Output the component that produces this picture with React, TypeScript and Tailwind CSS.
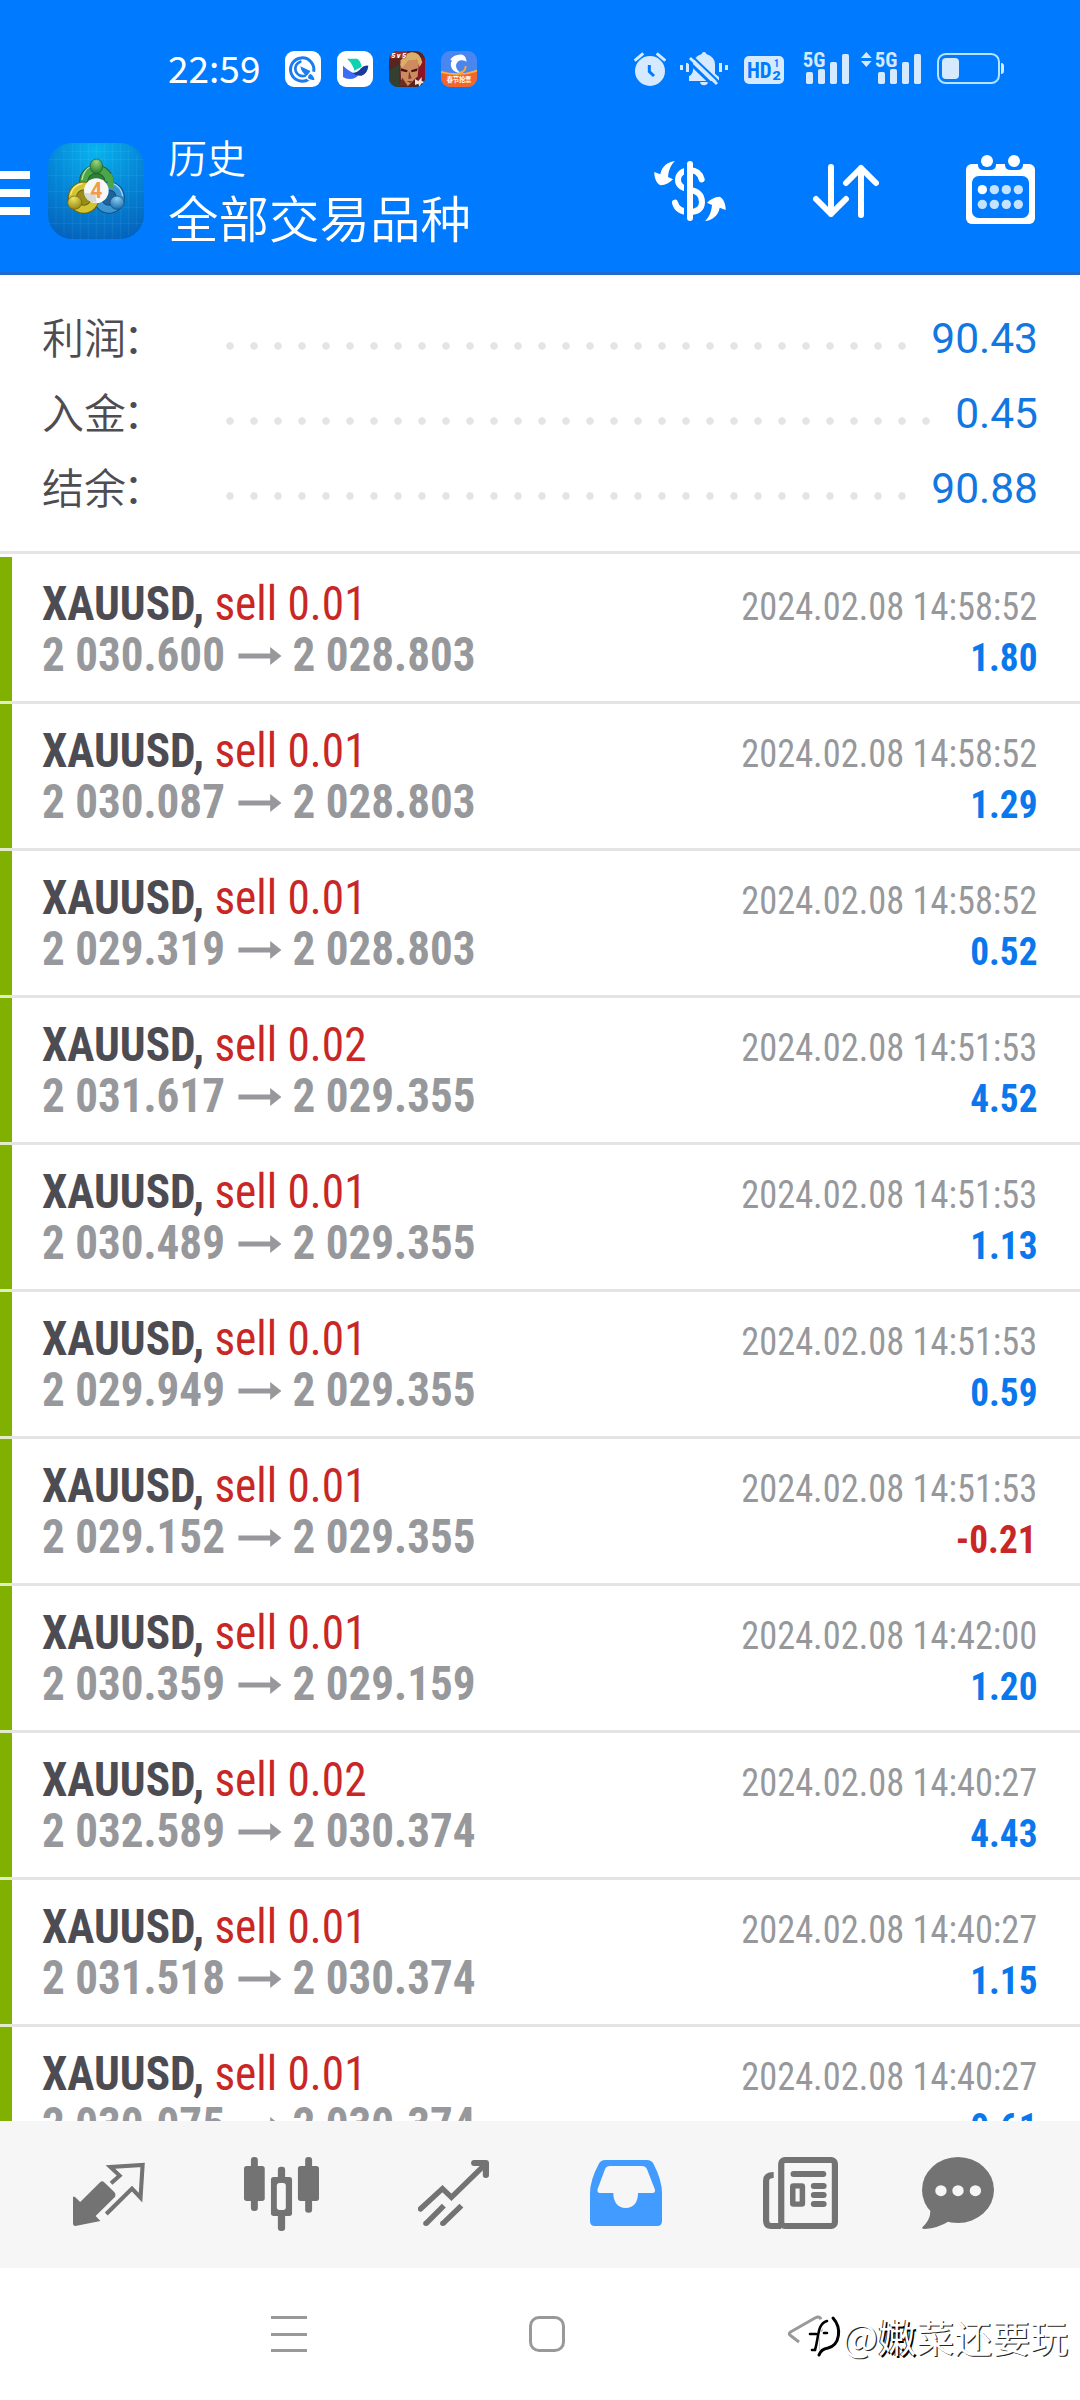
interface Deal {
  volume: string
  open: string
  close: string
  time: string
  profit: string
}

const SUMMARY = [
  { label: '利润', value: '90.43', dots: 'w-[696px]' },
  { label: '入金', value: '0.45', dots: 'w-[720px]' },
  { label: '结余', value: '90.88', dots: 'w-[696px]' },
]

const DEALS: Deal[] = [
  { volume: '0.01', open: '2 030.600', close: '2 028.803', time: '2024.02.08 14:58:52', profit: '1.80' },
  { volume: '0.01', open: '2 030.087', close: '2 028.803', time: '2024.02.08 14:58:52', profit: '1.29' },
  { volume: '0.01', open: '2 029.319', close: '2 028.803', time: '2024.02.08 14:58:52', profit: '0.52' },
  { volume: '0.02', open: '2 031.617', close: '2 029.355', time: '2024.02.08 14:51:53', profit: '4.52' },
  { volume: '0.01', open: '2 030.489', close: '2 029.355', time: '2024.02.08 14:51:53', profit: '1.13' },
  { volume: '0.01', open: '2 029.949', close: '2 029.355', time: '2024.02.08 14:51:53', profit: '0.59' },
  { volume: '0.01', open: '2 029.152', close: '2 029.355', time: '2024.02.08 14:51:53', profit: '-0.21' },
  { volume: '0.01', open: '2 030.359', close: '2 029.159', time: '2024.02.08 14:42:00', profit: '1.20' },
  { volume: '0.02', open: '2 032.589', close: '2 030.374', time: '2024.02.08 14:40:27', profit: '4.43' },
  { volume: '0.01', open: '2 031.518', close: '2 030.374', time: '2024.02.08 14:40:27', profit: '1.15' },
  { volume: '0.01', open: '2 030.075', close: '2 030.374', time: '2024.02.08 14:40:27', profit: '0.61' },
]

const BLUE = '#007aff'
const GREY = '#737373'

/* Status bar */

function AppBadges() {
  return (
    <div className="flex gap-4">
      <svg className="h-9 w-9" viewBox="0 0 108 108">
        <rect width="108" height="108" rx="27" fill="#fff" />
        <path d="M72 84a35 35 0 1 1 14-22" fill="none" stroke="#1a7cf0" strokeWidth="9" />
        <path d="M46 32A22 22 0 1 0 60 74" fill="none" stroke="#1a7cf0" strokeWidth="8" strokeLinecap="round" />
        <path d="M46 46l30 14-8 16q-18-8-22-30z" fill="#1a7cf0" />
        <path d="M76 66q16 10 14 24-16 0-24-8 2-12 10-16z" fill="#1a7cf0" stroke="#fff" strokeWidth="4" />
      </svg>
      <svg className="h-9 w-9" viewBox="0 0 108 108">
        <rect width="108" height="108" rx="27" fill="#fff" />
        <path d="M30 23h30q10 4 14 24l-22 12q-4-20-22-36z" fill="#0fd3b0" />
        <path d="M18 44q22 22 48 26-8 14-28 14-12 0-20-6z" fill="#3f6cf5" />
        <path d="M46 66q18-2 26-14 8-10 22-8-2 24-20 30-16 2-28-8z" fill="#173a9c" />
      </svg>
      <svg className="h-9 w-9" viewBox="0 0 108 108">
        <clipPath id="hero"><rect width="108" height="108" rx="27" /></clipPath>
        <g clipPath="url(#hero)">
          <rect width="108" height="108" fill="#5a2420" />
          <path d="M0 60l30-20v68H0z" fill="#33402f" />
          <path d="M80 20h28v60l-20 10z" fill="#8c1424" />
          <path d="M34 28q24-24 56 4l-4 44-30 30-20-20z" fill="#cf8a60" />
          <path d="M34 42q4-32 32-38 26-4 34 30l-8 14-8-22-26 2-18 22z" fill="#d9b068" />
          <path d="M36 52l20 6-2 6-18-4zM66 58l20-6-2 8-16 4z" fill="#3a1812" />
          <path d="M60 60l8 22-10 2zM52 90h18l-6 6z" fill="#7c3e2a" />
          <path d="M40 80l16 24H30z" fill="#6a2f24" />
          <path d="M78 84l10 6 10-12v12l10 4-12 4-4 10-4-10-10 4z" fill="#f6e3d4" />
          <path d="M0 0h56l-6 22H0z" fill="#96302a" />
        </g>
        <text x="7" y="21" fill="#fff" fontSize="22" fontWeight="900" fontStyle="italic" fontFamily="Roboto" textLength="44">5v5</text>
      </svg>
      <svg className="h-9 w-9" viewBox="0 0 108 108">
        <clipPath id="train"><rect width="108" height="108" rx="27" /></clipPath>
        <g clipPath="url(#train)">
          <rect width="108" height="108" fill="#4a86f0" />
          <path d="M0 62q54 16 108-4v50H0z" fill="#f2662e" />
          <path d="M0 60q54 16 108-4v6q-54 18-108 4z" fill="#fbb03c" />
        </g>
        <path d="M28 26q8-12 22-14 16-6 24 8l3 12q-8-6-18-4-14 4-14 18 2 12 14 20-24 0-29-20-2-14 4-16z" fill="#fff" />
        <path d="M56 65q18-2 18-20" fill="none" stroke="#f9a53a" strokeWidth="6" />
        <text x="17" y="92" fill="#fff" fontSize="19" fontWeight="700" fontFamily="'Noto Sans CJK SC'" textLength="74">春节抢票</text>
      </svg>
    </div>
  )
}

function Signal({ x }: { x: number }) {
  return (
    <g transform={`translate(${x} 0)`}>
      <text x="-1" y="110" fontSize="59" fontWeight="700" fontFamily="'Roboto Condensed'" textLength="68" lengthAdjust="spacingAndGlyphs">5G</text>
      <rect x="9" y="126" width="21" height="36" rx="5" />
      <rect x="45" y="117" width="21" height="45" rx="5" />
      <rect x="81" y="96" width="21" height="66" rx="5" />
      <rect x="117" y="72" width="21" height="90" rx="5" />
    </g>
  )
}

function StatusIcons() {
  return (
    <div className="flex">
      <svg className="h-[35px] w-8" viewBox="102 63 96 105" fill="#d6eaff">
        <circle cx="150" cy="123" r="45" />
        <path d="M104 92l26-22M170 70l26 22" stroke="#d6eaff" strokeWidth="9" />
        <path d="M148 105v20l14 13" fill="none" stroke={BLUE} strokeWidth="9" />
      </svg>
      <svg className="ml-3.5 h-[35px] w-12" viewBox="240 63 144 105" fill="#d6eaff">
        <path d="M240 105h9v15h-9zM258 99h9v27h-9zM357 99h9v27h-9zM375 105h9v15h-9z" />
        <path d="M267 153v-14q12-8 12-20v-16q0-22 26-31 1-6 7-6t7 6q26 9 26 31v28l12 10v12z" />
        <path d="M300 156h24q-2 10-12 10t-12-10z" />
        <path d="M262 92l82 79" stroke={BLUE} strokeWidth="9" />
        <path d="M270 84l81 78" stroke="#d6eaff" strokeWidth="9" />
        <path d="M276 78l82 79" stroke={BLUE} strokeWidth="6" />
      </svg>
      <svg className="ml-4 h-[35px] w-10" viewBox="432 63 120 105" fill={BLUE} fontFamily="'Roboto Condensed'" fontWeight="700">
        <rect x="432" y="78" width="120" height="84" rx="15" fill="#d6eaff" />
        <text x="441" y="143" fontSize="64" textLength="74" lengthAdjust="spacingAndGlyphs">HD</text>
        <text x="522" y="111" fontSize="30">1</text>
        <text x="517" y="151" fontSize="40" textLength="26" lengthAdjust="spacingAndGlyphs">2</text>
      </svg>
      <svg className="ml-[19px] h-[35px] w-[46px]" viewBox="609 63 138 105" fill="#d6eaff">
        <Signal x={609} />
      </svg>
      <svg className="ml-3 h-[35px] w-[60px]" viewBox="783 63 180 105" fill="#d6eaff">
        <path d="M799 66l16 18h-32zM799 111l16-18h-32z" />
        <Signal x={825} />
      </svg>
      <svg className="ml-4 h-[35px] w-[67px]" viewBox="1011 63 201 105" fill="#d6eaff">
        <rect x="1014" y="72" width="183" height="87" rx="23" fill="none" stroke="#b8e2ff" strokeWidth="6" />
        <rect x="1026" y="84" width="51" height="63" rx="12" />
        <path d="M1203 99q9 0 9 9v15q0 9-9 9z" />
      </svg>
    </div>
  )
}

/* Header */

function Logo() {
  return (
    <svg className="ml-[18px] h-24 w-24" viewBox="24 39 288 288">
      <defs>
        <radialGradient id="sky" cx="50%" cy="8%" r="95%">
          <stop offset="0" stopColor="#08b4ee" />
          <stop offset="0.5" stopColor="#0588d8" />
          <stop offset="1" stopColor="#0464bd" />
        </radialGradient>
        <radialGradient id="g" cx="50%" cy="20%" r="80%"><stop offset="0" stopColor="#9bd67c" /><stop offset="1" stopColor="#247a2c" /></radialGradient>
        <radialGradient id="y" cx="40%" cy="20%" r="80%"><stop offset="0" stopColor="#f0e468" /><stop offset="1" stopColor="#97870f" /></radialGradient>
        <radialGradient id="b" cx="50%" cy="20%" r="80%"><stop offset="0" stopColor="#8ed0f2" /><stop offset="1" stopColor="#1a6cae" /></radialGradient>
      </defs>
      <rect x="24" y="39" width="288" height="288" rx="72" fill="url(#sky)" />
      <path
        d="M48 75v216M72 50v266M97 39v288M121 39v288M145 39v288M169 39v288M193 39v288M217 39v288M242 39v288M266 50v266M290 75v216M60 64h216M26 88h284M24 136h288M24 184h288M24 232h288M26 280h284"
        stroke="#fff" strokeOpacity="0.1" strokeWidth="2"
      />
      {/* ring bodies */}
      <ellipse cx="169" cy="154" rx="38" ry="36" fill="#2f7f3a" stroke="#1c5c34" strokeWidth="27" />
      <ellipse cx="169" cy="154" rx="38" ry="36" fill="none" stroke="#4ba648" strokeWidth="21" />
      <path d="M126 150q4-32 30-42" fill="none" stroke="#b4e2a0" strokeWidth="4" />
      <ellipse cx="207" cy="203" rx="34" ry="35" fill="#1d639c" stroke="#154f80" strokeWidth="27" />
      <ellipse cx="207" cy="203" rx="34" ry="35" fill="none" stroke="#3b97d2" strokeWidth="21" />
      <path d="M218 160q26 10 30 38" fill="none" stroke="#a0daf4" strokeWidth="4" />
      <ellipse cx="131" cy="203" rx="34" ry="35" fill="#9a8c18" stroke="#6b6410" strokeWidth="27" />
      <ellipse cx="131" cy="203" rx="34" ry="35" fill="none" stroke="#d3c431" strokeWidth="21" />
      <path d="M92 194q6-28 36-34" fill="none" stroke="#f6ee96" strokeWidth="4" />
      <path d="M207 134q8 22 4 40" fill="none" stroke="#4ba648" strokeWidth="18" />
      {/* heads */}
      <ellipse cx="169" cy="109" rx="19" ry="22" fill="url(#g)" stroke="#1c5c34" strokeWidth="2" />
      <ellipse cx="104" cy="218" rx="21" ry="20" fill="url(#y)" stroke="#6b6410" strokeWidth="2" />
      <ellipse cx="231" cy="218" rx="21" ry="20" fill="url(#b)" stroke="#154f80" strokeWidth="2" />
      <circle cx="169" cy="182" r="37" fill="#f7f7f7" />
      <path d="M132 188l34 4 4 26q-34-2-38-30z" fill="#d6d8da" />
      <text x="151" y="205" fontSize="64" fontWeight="700" fontFamily="Roboto" fill="#f39a4c" textLength="36" lengthAdjust="spacingAndGlyphs">4</text>
    </svg>
  )
}

function HeaderIcons() {
  return (
    <div className="ml-auto flex gap-[87px] pr-[45px]">
      <svg className="h-[72px] w-[72px]" viewBox="162 375 216 216" fill="#fff">
        <path
          d="M305 448C298 425 285 421 270 421C245 421 234 435 234 450C234 470 250 474 270 479C292 485 306 492 306 517C306 538 290 546 270 546C248 546 230 538 225 518"
          fill="none" stroke="#fff" strokeWidth="18" strokeLinecap="round"
        />
        <path d="M252 400h9v170h-9z" fill={BLUE} />
        <rect x="261" y="393" width="18" height="180" rx="9" />
        <path d="M225 393C205 395 185 408 181 433L163 426C162 445 172 464 182 466C196 465 210 458 219 448L204 441C206 420 212 405 225 393Z" />
        <path d="M315 573C335 571 355 558 359 533L377 540C378 521 368 502 358 500C344 501 330 508 321 518L336 525C334 546 328 561 315 573Z" />
      </svg>
      <svg className="h-[72px] w-[66px]" viewBox="639 375 198 216" fill="none" stroke="#fff" strokeWidth="18" strokeLinecap="round" strokeLinejoin="round">
        <path d="M693 411v141M648 507l45 45 45-45M783 555V414M738 459l45-45 45 45" />
      </svg>
      <svg className="h-[72px] w-[69px]" viewBox="1098 375 207 216" fill="#fff">
        <rect x="1098" y="402" width="207" height="180" rx="17" />
        <rect x="1116" y="438" width="171" height="126" rx="20" fill={BLUE} />
        <path d="M1134 400h54q2 20-18 20h-18q-20 0-18-20zM1215 400h54q2 20-18 20h-18q-20 0-18-20z" fill={BLUE} />
        <circle cx="1161" cy="393" r="18" />
        <circle cx="1242" cy="393" r="18" />
        {[479, 523].map((y) =>
          [1147, 1183, 1219, 1255].map((x) => (
            <circle key={`${x}-${y}`} cx={x} cy={y} r="14" fill={x === 1147 && y === 479 ? '#fff' : '#c5e2ff'} />
          )),
        )}
      </svg>
    </div>
  )
}

function Header() {
  return (
    <header className="h-[275px] border-b-[3px] border-[#1f6bd0] bg-[#007aff] text-white">
      <div className="flex h-[107px] items-start pl-[168px] pt-[51px]">
        <div className="-mt-[2px] w-[117px] font-['Noto_Sans_CJK_SC'] text-[37px] leading-[36px]">22:59</div>
        <AppBadges />
        <div className="ml-auto pr-[76px]">
          <StatusIcons />
        </div>
      </div>
      <div className="flex h-[168px] items-center">
        <div className="flex w-[30px] flex-col gap-2.5 pt-1">
          <div className="h-2 bg-white" />
          <div className="h-2 bg-white" />
          <div className="h-2 bg-white" />
        </div>
        <Logo />
        <div className="pb-[11px] pl-6 font-['Noto_Sans_CJK_SC'] font-[350] leading-[60px]">
          <div className="text-[39px]">历史</div>
          <h1 className="text-[50.5px]">全部交易品种</h1>
        </div>
        <HeaderIcons />
      </div>
    </header>
  )
}

/* Deals */

function Summary() {
  return (
    <section className="h-[279px] border-b-[3px] border-[#e5e5e5] pl-[42px] pr-[42px] pt-[25px]">
      {SUMMARY.map(({ label, value, dots }) => (
        <div key={label} className="flex h-[75px] items-center">
          <div className="w-[176px] pb-[4px] font-['Noto_Sans_CJK_SC'] text-[42px] font-[350] leading-[71px] text-[#4d4c52]">
            {label}<span className="-ml-[3px]">：</span>
          </div>
          <div className={`mt-[16px] h-2 bg-[radial-gradient(circle,#e4e4e4_3.4px,transparent_4.1px)] bg-[length:24px_8px] ${dots}`} />
          <div className="ml-auto pt-[2px] font-[Roboto] text-[42.5px] text-[#1277e0]">{value}</div>
        </div>
      ))}
    </section>
  )
}

function DealRow({ deal }: { deal: Deal }) {
  const loss = deal.profit.startsWith('-')
  return (
    <div className="flex h-[147px] shrink-0 border-b-[3px] border-[#e4e4e4] font-['Roboto_Condensed']">
      <div className="-mb-[3px] w-3 border-b-[3px] border-[#e1ebc6] bg-[#80b000]" />
      <div className="flex-1 pl-[30px] pr-[43px] pt-[21px] text-[48px] leading-[51px]">
        <div className="flex h-[51px] items-baseline justify-between">
          <div className="origin-left scale-x-[0.943] whitespace-pre">
            <span className="font-bold text-[#4d4c52]">XAUUSD, </span>
            <span className="text-[#c92626]">sell {deal.volume}</span>
          </div>
          <div className="origin-right scale-x-[0.933] text-[39px] text-[#97989b]">{deal.time}</div>
        </div>
        <div className="flex h-[51px] items-baseline justify-between font-bold">
          <div className="flex origin-left scale-x-[0.939] items-baseline text-[#97989b]">
            <span>{deal.open}</span>
            <svg className="ml-3.5 mr-3 h-[18px] w-[46px] -translate-y-1.5" viewBox="0 0 46 18" fill="#97989b">
              <path d="M0 6.6h34V0l12 9-12 9v-6.600H0z" />
            </svg>
            <span>{deal.close}</span>
          </div>
          <div className={loss ? 'origin-right scale-x-[0.955] text-[39px] text-[#c92626]' : 'origin-right scale-x-[0.955] text-[39px] text-[#0a78ec]'}>
            {deal.profit}
          </div>
        </div>
      </div>
    </div>
  )
}

/* Bottom bars */

function TabBar() {
  return (
    <nav className="flex h-[147px] items-center bg-[#f6f6f6] pb-[2px] pl-[23px]">
      <div className="flex w-[172px] justify-center">
        <svg className="h-[74px] w-[72px]" viewBox="215 471 210 222" preserveAspectRatio="none" fill={GREY}>
          <path d="M215 590h5l16 16 58-59q6-6 12 0l30 30q6 7 2 13l-57 58 14 15-73 15q-7 0-7-8z" />
          <path d="M326 550l25-23-27-26 94-6-6 98-25-27-75 76" fill="none" stroke={GREY} strokeWidth="12" />
        </svg>
      </div>
      <div className="flex w-[172px] justify-center">
        <svg className="h-[74px] w-[75px]" viewBox="709 471 217 222" preserveAspectRatio="none" fill={GREY}>
          <rect x="709" y="498" width="60" height="105" rx="8" />
          <rect x="729" y="471" width="20" height="162" rx="9" />
          <rect x="865" y="498" width="61" height="105" rx="8" />
          <rect x="886" y="471" width="20" height="167" rx="9" />
          <rect x="807" y="500" width="21" height="193" rx="9" />
          <rect x="787" y="531" width="61" height="117" rx="8" />
          <rect x="804" y="549" width="26" height="81" rx="8" fill="#f6f6f6" />
        </svg>
      </div>
      <div className="flex w-[172px] justify-center">
        <svg className="h-[74px] w-[71px]" viewBox="1214 471 206 222" preserveAspectRatio="none" fill="none" stroke={GREY} strokeWidth="16">
          <path d="M1221 627l64-61 26 26 95-96" strokeLinecap="round" />
          <path d="M1377 489h34v36" strokeWidth="18" strokeLinecap="round" strokeLinejoin="round" />
          <path d="M1237 671l52-54M1286 671l54-54" />
          <path d="M1237 670v.1M1286 670v.1" strokeLinecap="round" />
        </svg>
      </div>
      <div className="flex w-[174px] justify-center">
        <svg className="h-[74px] w-[72px]" viewBox="146 471 210 222" preserveAspectRatio="none" fill="#429bff">
          <path
            fillRule="evenodd"
            d="M190 480H312Q325 480 331 491Q356 540 356 580V664Q356 678 342 678H160Q146 678 146 664V580Q146 540 172 491Q178 480 190 480ZM204 498Q194 498 190 507L168 568Q166 579 175 579H214C214 605 226 624 250 624C275 624 286 605 286 579H328Q338 579 335 568L312 507Q308 498 297 498Z"
          />
        </svg>
      </div>
      <div className="flex w-[174px] justify-center">
        <svg className="h-[74px] w-[75px]" viewBox="646 471 218 222" preserveAspectRatio="none" fill="none" stroke={GREY} strokeWidth="18">
          <rect x="699" y="480" width="156" height="198" rx="11" />
          <path d="M677 525Q655 525 655 542V662Q655 678 670 678H699" />
          <path d="M735 522h86M794 558h28M794 585h28M794 612h28" strokeLinecap="round" />
          <rect x="732.500" y="557.500" width="28" height="55" rx="2" strokeWidth="16" />
        </svg>
      </div>
      <div className="flex w-[142px] justify-center">
        <svg className="h-[74px] w-[72px]" viewBox="1109 471 209 222" preserveAspectRatio="none" fill={GREY}>
          <ellipse cx="1213.500" cy="570" rx="104.500" ry="99" />
          <path d="M1132 625Q1138 655 1110 682Q1108 687 1117 687Q1156 684 1190 662Z" />
          <g fill="#f6f6f6">
            <circle cx="1164" cy="572" r="16.500" />
            <circle cx="1213.500" cy="572" r="16.500" />
            <circle cx="1264" cy="572" r="16.500" />
          </g>
        </svg>
      </div>
    </nav>
  )
}

function SystemNav() {
  return (
    <div className="relative flex h-[132px] items-center bg-white pl-[271px]">
      <div className="flex w-9 flex-col gap-[13.5px]">
        <div className="h-[3px] bg-[#999]" />
        <div className="h-[3px] bg-[#999]" />
        <div className="h-[3px] bg-[#999]" />
      </div>
      <div className="ml-[222px] h-9 w-9 rounded-[10px] border-[3px] border-[#999]" />
      <svg className="ml-[222px] h-10 w-9" viewBox="0 0 36 40" fill="none" stroke="#999" strokeWidth="3" strokeLinejoin="round">
        <path d="M12 28L3.500 21.500Q1 20 3.500 18L28 4Q34 1 34 7V36" />
      </svg>
      <div className="absolute left-[804px] top-[45px] flex items-center">
        <svg className="h-[46px] w-[38px]" viewBox="0 0 38 46" fill="none" strokeLinecap="round">
          <path d="M3 22h6M8 36C13 24 11 10 22 9M20 22v16" stroke="#fff" strokeWidth="8" />
          <path d="M29 8C37 16 36 32 20 39" stroke="#fff" strokeWidth="5" />
          <path d="M6 21h6M8 37h3C15 24 13 11 23 8M20 20h3" stroke="#000" strokeWidth="2.600" />
          <path d="M29 5C38 15 36 32 24 35Q17 36 15 42" stroke="#000" strokeWidth="3" />
        </svg>
        <span className="font-['Noto_Sans_CJK_SC'] text-[38px] leading-[46px] text-white [text-shadow:1.3px_1.3px_0.4px_rgba(0,0,0,0.85)]">
          @<span className="[text-shadow:1.5px_1.5px_0_#000,-1px_0_0_#333]">嫩</span>菜还要玩
        </span>
      </div>
    </div>
  )
}

export default function App() {
  return (
    <div className="flex h-[2400px] w-[1080px] flex-col overflow-hidden bg-white">
      <Header />
      <Summary />
      <main className="flex min-h-0 flex-1 flex-col overflow-hidden pt-[3px]">
        {DEALS.map((deal, i) => (
          <DealRow key={i} deal={deal} />
        ))}
      </main>
      <TabBar />
      <SystemNav />
    </div>
  )
}
